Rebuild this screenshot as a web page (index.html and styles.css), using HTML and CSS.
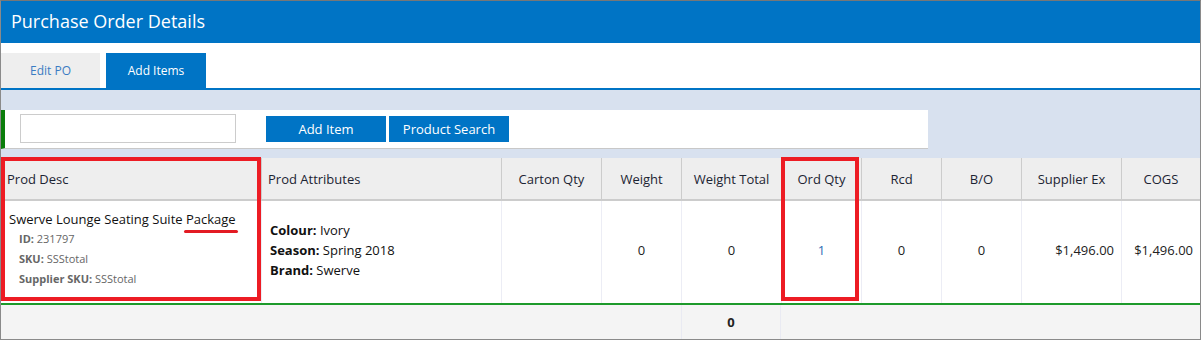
FILE: index.html
```html
<!DOCTYPE html>
<html>
	<head>
		<meta charset="utf-8">
		<title>Purchase Order Details</title>
		<link rel="stylesheet" href="styles.css">
	</head>
	<body>
		<div class="frame">
			<div class="topbar">Purchase Order Details</div>
			<div class="tabs">
				<div class="tab">Edit PO</div>
				<div class="tab active">Add Items</div>
			</div>
			<div class="panel">
				<div class="toolbar">
					<input type="text" class="search">
					<button type="button" class="btn first">Add Item</button>
					<button type="button" class="btn">Product Search</button>
				</div>
			</div>
			<div class="grid">
				<div class="row head">
					<div class="cell left">Prod Desc</div>
					<div class="cell left">Prod Attributes</div>
					<div class="cell">Carton Qty</div>
					<div class="cell">Weight</div>
					<div class="cell">Weight Total</div>
					<div class="cell">Ord Qty</div>
					<div class="cell">Rcd</div>
					<div class="cell">B/O</div>
					<div class="cell">Supplier Ex</div>
					<div class="cell">COGS</div>
				</div>
				<div class="row item">
					<div class="cell desc">
						<div class="name">Swerve Lounge Seating Suite Package</div>
						<div class="meta"><b>ID:</b> 231797</div>
						<div class="meta"><b>SKU:</b> SSStotal</div>
						<div class="meta"><b>Supplier SKU:</b> SSStotal</div>
					</div>
					<div class="cell attrs">
						<div><b>Colour:</b> Ivory</div>
						<div><b>Season:</b> Spring 2018</div>
						<div><b>Brand:</b> Swerve</div>
					</div>
					<div class="cell"></div>
					<div class="cell">0</div>
					<div class="cell">0</div>
					<div class="cell qty">1</div>
					<div class="cell">0</div>
					<div class="cell">0</div>
					<div class="cell money">$1,496.00</div>
					<div class="cell money">$1,496.00</div>
				</div>
				<div class="row total">
					<div class="cell"></div>
					<div class="cell"></div>
					<div class="cell"></div>
					<div class="cell"></div>
					<div class="cell sum"><b>0</b></div>
					<div class="cell"></div>
					<div class="cell"></div>
					<div class="cell"></div>
					<div class="cell"></div>
					<div class="cell"></div>
				</div>
				<!-- annotations -->
				<div class="mark mark-desc"></div>
				<div class="mark mark-qty"></div>
				<div class="underline"></div>
			</div>
		</div>
	</body>
</html>
```

FILE: styles.css
```css
body {
	margin: 0;
	background-color: #fff;
	font-family: "Open Sans", "Liberation Sans", sans-serif;
	color: #222;
}

.frame {
	width: 1201px;
	height: 340px;
	box-sizing: border-box;
	border: 1px solid #8a8a8a;
	border-top-color: #777;
	overflow: hidden;
}

.topbar {
	height: 42px;
	line-height: 40px;
	padding-left: 10px;
	background-color: #0074c5;
	color: #fff;
	font-size: 18px;
}

.tabs {
	display: flex;
	align-items: flex-end;
	gap: 6px;
	height: 45px;
	border-bottom: 2px solid #0074c5;
}

.tab {
	width: 99px;
	height: 35px;
	line-height: 35px;
	text-align: center;
	font-size: 12px;
	background-color: #eee;
	color: #3a7cc3;
}

.tab.active {
	width: 100px;
	background-color: #0074c5;
	color: #fff;
}

.panel {
	padding: 20px 0 9px 0;
	background-color: #d8e1ef;
}

.toolbar {
	display: flex;
	align-items: center;
	width: 927px;
	height: 39px;
	box-sizing: border-box;
	padding-bottom: 1px;
	border-left: 4px solid #0b7d0b;
	border-bottom: 1px solid #c8c8c8;
	background-color: #fff;
}

.search {
	width: 216px;
	height: 29px;
	box-sizing: border-box;
	margin: 0 30px 0 15px;
	border: 1px solid #ccc;
	outline: none;
}

.btn {
	width: 120px;
	height: 26px;
	border: none;
	background-color: #0074c5;
	color: #fff;
	font-family: "Open Sans", "Liberation Sans", sans-serif;
	font-size: 13px;
	padding: 0;
}

.btn.first {
	margin-right: 3px;
}

.grid {
	position: relative;
}

.row {
	display: grid;
	grid-template-columns: 260px 240px 100px 80px 100px 80px 80px 80px 100px 1fr;
}

.cell {
	display: flex;
	align-items: center;
	justify-content: center;
	box-sizing: border-box;
	border-left: 1px solid #ecedf5;
	font-size: 13px;
}

.cell:first-child {
	border-left: none;
}

.head {
	height: 41px;
	background-color: #eee;
	border-bottom: 2px solid #ccc;
}

.head .cell {
	border-left-color: #ccc;
	color: #1c2433;
}

.head .left {
	justify-content: flex-start;
	padding-left: 6px;
}

.item {
	height: 102px;
	background-color: #fff;
}

.item .cell {
	padding-bottom: 4px;
}

.desc, .attrs {
	flex-direction: column;
	align-items: flex-start;
	justify-content: center;
	padding-left: 8px;
}

.desc .name {
	color: #111;
	line-height: 20px;
	margin-top: -2px;
}

.meta {
	font-size: 11px;
	color: #666;
	padding-left: 10px;
	line-height: 20px;
}

.attrs {
	color: #111;
	line-height: 20px;
}

.qty {
	color: #2d6db5;
}

.item .money {
	justify-content: flex-end;
	padding-right: 7px;
}

.total {
	height: 38px;
	box-sizing: border-box;
	border-top: 2px solid #1d9a2b;
	background-color: #f4f4f4;
}

.total .cell {
	border-left-color: transparent;
}

.total .sum {
	border-left-color: #e9eaf2;
	border-right: 1px solid #e9eaf2;
	padding-bottom: 2px;
}

.mark {
	position: absolute;
	top: -1px;
	height: 144px;
	box-sizing: border-box;
	border: 4px solid #ed1c24;
}

.mark-desc {
	left: 0;
	width: 260px;
}

.mark-qty {
	left: 780px;
	width: 78px;
}

.underline {
	position: absolute;
	left: 183px;
	top: 72px;
	width: 54px;
	height: 3px;
	border-radius: 2px;
	background-color: #e31b23;
}
```
